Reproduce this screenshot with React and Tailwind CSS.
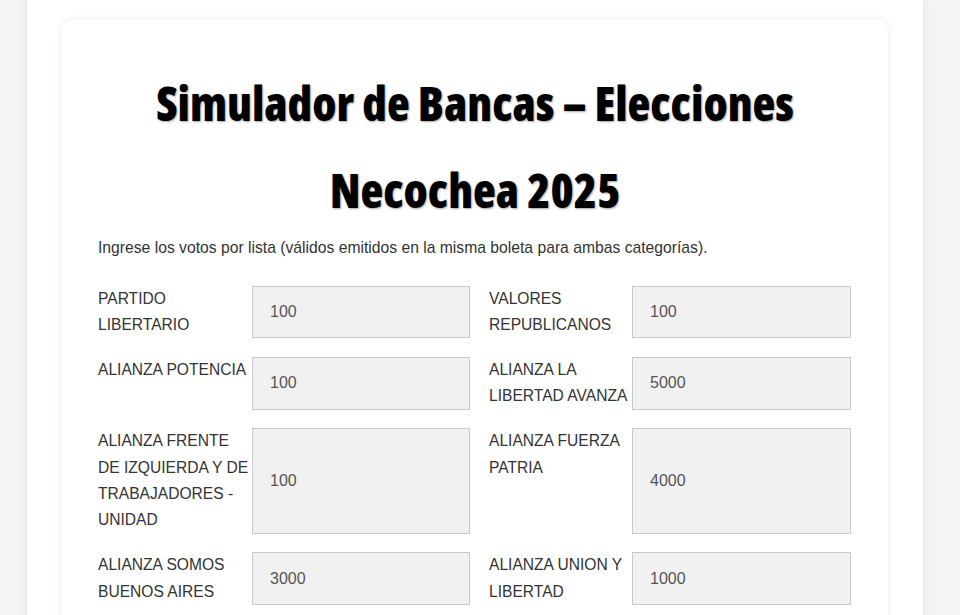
import { useState } from 'react';

const rows = [
  [
    { name: 'PARTIDO LIBERTARIO', votes: '100' },
    { name: 'VALORES REPUBLICANOS', votes: '100' },
  ],
  [
    { name: 'ALIANZA POTENCIA', votes: '100' },
    { name: 'ALIANZA LA LIBERTAD AVANZA', votes: '5000' },
  ],
  [
    { name: 'ALIANZA FRENTE DE IZQUIERDA Y DE TRABAJADORES - UNIDAD', votes: '100' },
    { name: 'ALIANZA FUERZA PATRIA', votes: '4000' },
  ],
  [
    { name: 'ALIANZA SOMOS BUENOS AIRES', votes: '3000' },
    { name: 'ALIANZA UNION Y LIBERTAD', votes: '1000' },
  ],
];

function VoteInput({ value, onChange }) {
  return (
    <input
      type="text"
      value={value}
      onChange={(e) => onChange(e.target.value)}
      className="w-full self-stretch bg-[#f1f1f1] border border-[#c9c9c9] pl-[17px] text-[16px] text-[#555] outline-none"
    />
  );
}

export default function App() {
  const [votes, setVotes] = useState(rows.map((r) => r.map((p) => p.votes)));

  const update = (i, j, v) => {
    setVotes((prev) => prev.map((r, ri) => (ri === i ? r.map((c, ci) => (ci === j ? v : c)) : r)));
  };

  return (
    <div className="min-h-screen bg-[#f4f4f4] font-['Liberation_Sans',Arial,sans-serif]">
      <div className="w-[896px] ml-[27px] min-h-screen bg-white shadow-[0_0_8px_rgba(0,0,0,0.08)] pt-5 px-[35px]">
        <div className="rounded-xl bg-white shadow-[0_0_10px_rgba(0,0,0,0.08)] pt-[40px] px-9 pb-10">
          <h1 className="text-center text-[47px] leading-[87px] font-extrabold text-black font-['Open_Sans',sans-serif] [font-stretch:condensed] [text-shadow:1px_1px_2px_rgba(0,0,0,0.35)]">
            Simulador de Bancas – Elecciones
            <br />
            Necochea 2025
          </h1>
          <p className="mt-[2px] text-[15.7px] leading-6 text-[#333]">
            Ingrese los votos por lista (válidos emitidos en la misma boleta para ambas categorías).
          </p>

          <div className="mt-[25.5px] grid grid-cols-[154px_218px_162px_219px] gap-y-[18.5px]">
            {rows.map((row, i) => (
              <div key={i} className="contents">
                <label className="text-[15.6px] leading-[26.4px] text-[#333]">{row[0].name}</label>
                <VoteInput value={votes[i][0]} onChange={(v) => update(i, 0, v)} />
                <label className="pl-[19px] text-[15.6px] leading-[26.4px] text-[#333]">{row[1].name}</label>
                <VoteInput value={votes[i][1]} onChange={(v) => update(i, 1, v)} />
              </div>
            ))}
          </div>
        </div>
      </div>
    </div>
  );
}
